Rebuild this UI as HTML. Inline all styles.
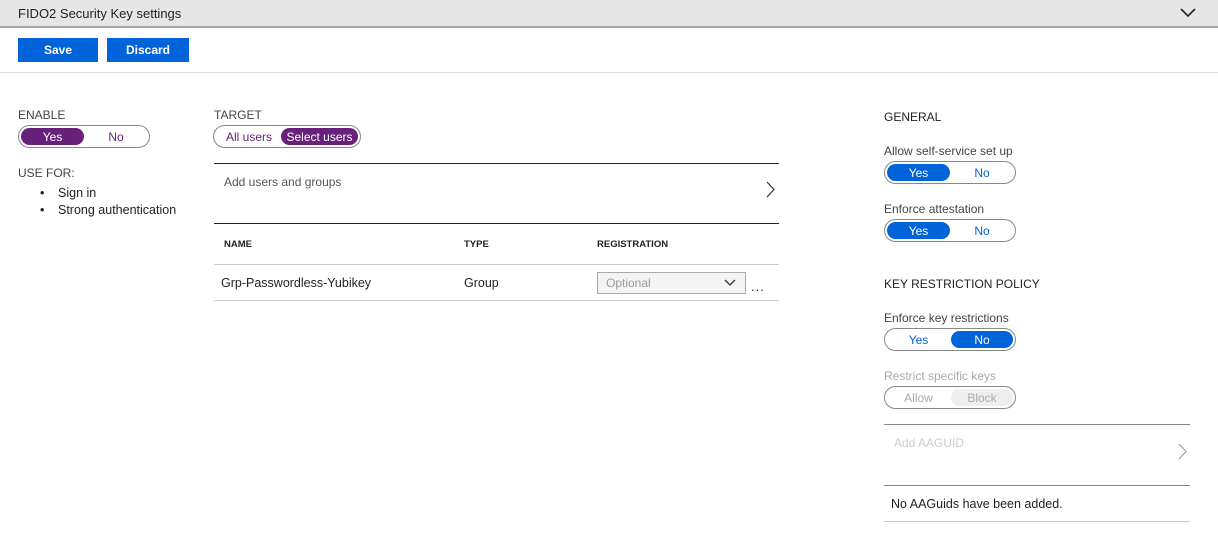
<!DOCTYPE html>
<html><head><style>
*{margin:0;padding:0;box-sizing:border-box}
body{width:1218px;height:539px;background:#fff;font-family:"Liberation Sans",sans-serif;color:#222;position:relative;overflow:hidden;font-size:12px}
.a{position:absolute;white-space:nowrap}
.hdr{left:0;top:0;width:1218px;height:28px;background:#e6e6e6;border-bottom:2px solid #a6a6a6}
.btn{background:#0063d9;color:#fff;font-weight:bold;font-size:12px;text-align:center;line-height:24px;height:24px}
.lbl{font-size:12px;color:#444}
.tg{border:1px solid #888;border-radius:12px;height:23px}
.pill{position:absolute;top:2px;height:17px;border-radius:9px;color:#fff;text-align:center;line-height:18px;font-size:12px}
.opt{position:absolute;top:2px;line-height:18px;font-size:12px;text-align:center}
.ln{height:1px;background:#222}
.lt{height:1px;background:#ccc}
.th{font-size:9.5px;font-weight:bold;color:#222}
</style></head><body>
<div class="a hdr"></div>
<div class="a" style="left:18px;top:6px;font-size:13px;color:#222">FIDO2 Security Key settings</div>
<svg class="a" style="left:1180px;top:8px" width="16" height="10"><path d="M1 1 L8 8 L15 1" fill="none" stroke="#222" stroke-width="1.6"/></svg>
<div class="a btn" style="left:18px;top:38px;width:80px">Save</div>
<div class="a btn" style="left:107px;top:38px;width:82px">Discard</div>
<div class="a lt" style="left:0;top:72px;width:1218px;background:#ddd"></div>

<div class="a lbl" style="left:18px;top:108px">ENABLE</div>
<div class="a tg" style="left:18px;top:125px;width:132px"><div class="pill" style="left:2px;width:63px;background:#68217a">Yes</div><div class="opt" style="left:66px;width:62px;color:#68217a">No</div></div>
<div class="a lbl" style="left:18px;top:166px">USE FOR:</div>
<div class="a" style="left:40px;top:185px;font-size:12.5px;line-height:17px">•</div>
<div class="a" style="left:40px;top:202px;font-size:12.5px;line-height:17px">•</div>
<div class="a" style="left:58px;top:185px;font-size:12.5px;line-height:17px">Sign in<br>Strong authentication</div>

<div class="a lbl" style="left:214px;top:108px">TARGET</div>
<div class="a tg" style="left:213px;top:125px;width:148px"><div class="opt" style="left:4px;width:62px;color:#68217a">All users</div><div class="pill" style="left:67px;width:77px;background:#68217a">Select users</div></div>
<div class="a ln" style="left:214px;top:163px;width:565px"></div>
<div class="a" style="left:224px;top:175px;color:#555">Add users and groups</div>
<svg class="a" style="left:766px;top:181px" width="10" height="17"><path d="M1 1 L8 8.5 L1 16" fill="none" stroke="#333" stroke-width="1.2"/></svg>
<div class="a ln" style="left:214px;top:223px;width:565px"></div>
<div class="a th" style="left:224px;top:239px">NAME</div>
<div class="a th" style="left:464px;top:239px">TYPE</div>
<div class="a th" style="left:597px;top:239px">REGISTRATION</div>
<div class="a lt" style="left:214px;top:264px;width:565px"></div>
<div class="a" style="left:221px;top:276px;font-size:12.5px">Grp-Passwordless-Yubikey</div>
<div class="a" style="left:464px;top:276px;font-size:12.5px">Group</div>
<div class="a" style="left:597px;top:272px;width:149px;height:22px;background:#f4f4f4;border:1px solid #aaa"><span style="position:absolute;left:8px;top:3px;color:#999">Optional</span><svg style="position:absolute;left:126px;top:6px" width="12" height="8"><path d="M1 1 L6 6 L11 1" fill="none" stroke="#333" stroke-width="1.3"/></svg></div>
<div class="a" style="left:751px;top:279px;font-size:13px;letter-spacing:1px">...</div>
<div class="a lt" style="left:214px;top:300px;width:565px"></div>

<div class="a lbl" style="left:884px;top:110px;color:#222">GENERAL</div>
<div class="a lbl" style="left:884px;top:144px">Allow self-service set up</div>
<div class="a tg" style="left:884px;top:161px;width:132px"><div class="pill" style="left:2px;width:63px;background:#0063d9">Yes</div><div class="opt" style="left:66px;width:62px;color:#0063d9">No</div></div>
<div class="a lbl" style="left:884px;top:202px">Enforce attestation</div>
<div class="a tg" style="left:884px;top:219px;width:132px"><div class="pill" style="left:2px;width:63px;background:#0063d9">Yes</div><div class="opt" style="left:66px;width:62px;color:#0063d9">No</div></div>
<div class="a lbl" style="left:884px;top:277px;color:#222">KEY RESTRICTION POLICY</div>
<div class="a lbl" style="left:884px;top:311px">Enforce key restrictions</div>
<div class="a tg" style="left:884px;top:328px;width:132px"><div class="opt" style="left:2px;width:63px;color:#0063d9">Yes</div><div class="pill" style="left:66px;width:62px;background:#0063d9">No</div></div>
<div class="a lbl" style="left:884px;top:369px;color:#aaa">Restrict specific keys</div>
<div class="a tg" style="left:884px;top:386px;width:132px"><div class="opt" style="left:2px;width:63px;color:#aaa">Allow</div><div class="pill" style="left:66px;width:62px;background:#eee;color:#aaa">Block</div></div>
<div class="a lt" style="left:884px;top:424px;width:306px;background:#888"></div>
<div class="a" style="left:894px;top:436px;color:#ccc">Add AAGUID</div>
<svg class="a" style="left:1178px;top:443px" width="10" height="17"><path d="M1 1 L8 8.5 L1 16" fill="none" stroke="#999" stroke-width="1.1"/></svg>
<div class="a lt" style="left:884px;top:485px;width:306px;background:#888"></div>
<div class="a" style="left:891px;top:497px;font-size:12.5px">No AAGuids have been added.</div>
<div class="a lt" style="left:884px;top:521px;width:306px"></div>
</body></html>
